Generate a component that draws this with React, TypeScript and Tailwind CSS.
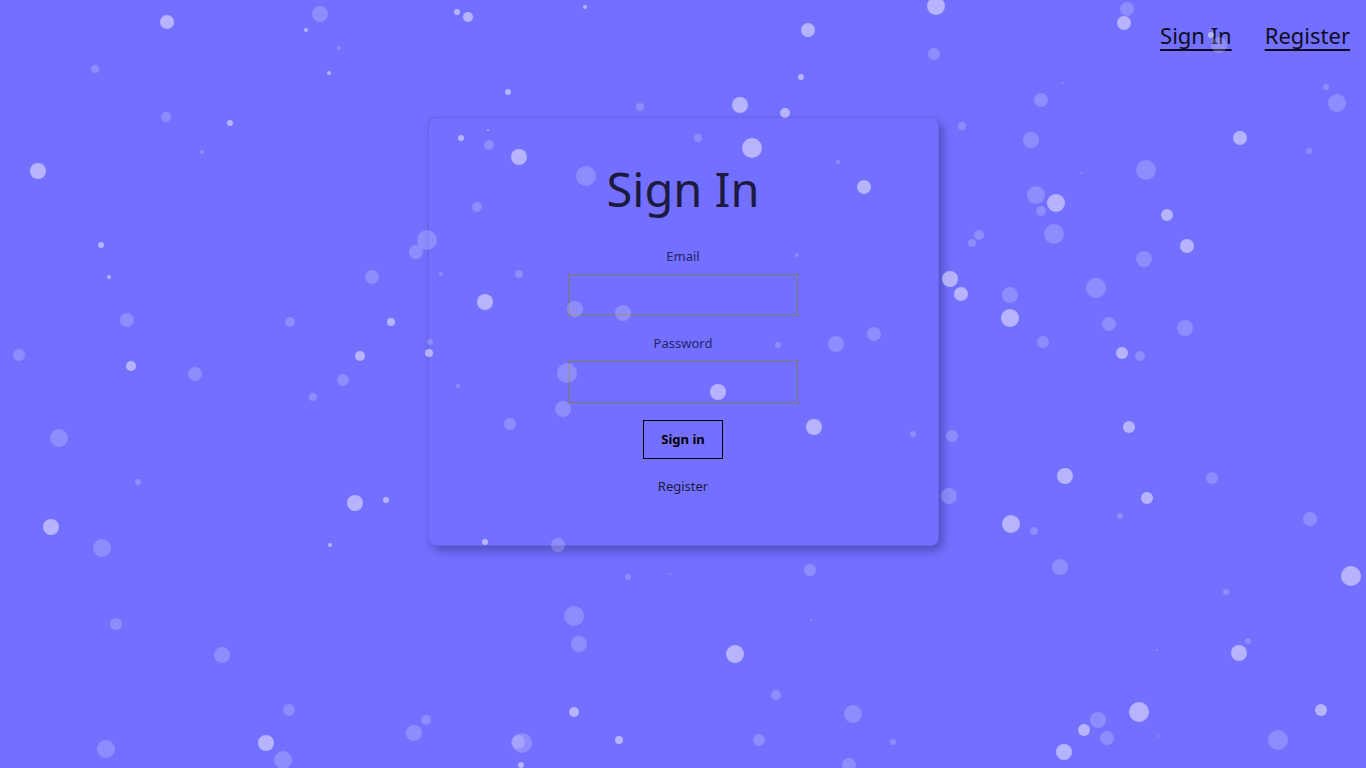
import React from "react";

// snowflakes: x, y, radius, bright (1) or faint (0)
const flakes: [number, number, number, number][] = [
  [167, 22, 7, 1], [320, 14, 8, 0], [457, 12, 3, 1], [468, 17, 5, 1], [585, 7, 2, 1], [306, 30, 2, 1],
  [95, 69, 4, 0], [329, 73, 2, 1], [339, 48, 2, 0], [230, 123, 3, 1], [166, 117, 5, 0], [202, 152, 2, 0],
  [38, 171, 8, 1], [101, 245, 3, 1], [109, 277, 2, 1], [127, 320, 7, 0], [19, 355, 6, 0], [131, 366, 5, 1],
  [195, 374, 7, 0], [59, 438, 9, 0], [138, 482, 3, 0], [51, 527, 8, 1], [102, 548, 9, 0], [116, 624, 6, 0],
  [222, 655, 8, 0], [289, 710, 6, 0], [266, 743, 8, 1], [106, 749, 9, 0], [283, 760, 9, 0], [330, 545, 2, 1],
  [355, 503, 8, 1], [386, 500, 3, 1], [343, 380, 6, 0], [360, 356, 5, 1], [391, 322, 4, 1], [372, 277, 7, 0],
  [290, 322, 5, 0], [313, 397, 4, 0], [430, 342, 3, 0], [429, 353, 4, 1], [458, 386, 2, 0], [441, 274, 2, 0],
  [427, 240, 10, 0], [416, 252, 7, 0], [477, 207, 5, 0], [485, 302, 8, 1], [519, 157, 8, 1], [489, 145, 5, 0],
  [461, 138, 3, 1], [488, 130, 1, 1], [508, 92, 3, 1], [586, 176, 10, 0], [640, 107, 4, 0], [698, 138, 4, 0],
  [740, 105, 8, 1], [752, 148, 10, 1], [785, 113, 5, 1], [801, 77, 3, 1], [808, 30, 7, 1], [838, 162, 2, 0],
  [864, 187, 7, 1], [797, 255, 2, 0], [519, 274, 4, 0], [575, 309, 8, 0], [623, 313, 8, 0], [567, 373, 10, 0],
  [563, 409, 8, 0], [718, 392, 8, 1], [778, 345, 3, 0], [836, 344, 8, 0], [874, 334, 7, 0], [510, 424, 6, 0],
  [814, 427, 8, 1], [913, 434, 3, 0], [952, 436, 6, 0], [949, 496, 8, 0], [961, 294, 7, 1], [950, 279, 8, 1],
  [979, 235, 5, 0], [972, 243, 4, 0], [962, 126, 4, 0], [934, 54, 6, 0], [936, 6, 9, 1], [1124, 23, 7, 1],
  [1127, 9, 7, 0], [1041, 100, 7, 0], [1063, 83, 1, 0], [1031, 140, 8, 0], [1036, 195, 9, 0], [1056, 203, 9, 1],
  [1041, 211, 5, 0], [1054, 234, 10, 0], [1096, 288, 10, 0], [1010, 295, 8, 0], [1010, 318, 9, 1], [1109, 324, 7, 0],
  [1043, 342, 6, 0], [1122, 353, 6, 1], [1140, 356, 5, 0], [1144, 259, 8, 0], [1146, 170, 10, 0], [1167, 215, 6, 1],
  [1187, 246, 7, 1], [1081, 173, 1, 0], [1185, 328, 8, 0], [1240, 138, 7, 1], [1309, 151, 3, 0], [1326, 87, 3, 0],
  [1337, 103, 9, 0], [1211, 35, 3, 1], [1219, 45, 8, 0], [1129, 427, 6, 1], [1065, 476, 8, 1], [1147, 498, 6, 1],
  [1212, 478, 6, 0], [1120, 516, 3, 0], [1034, 531, 4, 0], [1011, 524, 9, 1], [1060, 567, 8, 0], [1310, 519, 7, 0],
  [1351, 576, 10, 1], [1226, 592, 3, 0], [1248, 641, 3, 0], [1239, 653, 8, 1], [1157, 650, 1, 0], [1139, 712, 10, 1],
  [1098, 720, 8, 0], [1084, 730, 6, 1], [1107, 738, 7, 0], [1064, 752, 8, 1], [1278, 740, 10, 0], [1321, 710, 6, 1],
  [810, 570, 6, 0], [853, 714, 9, 0], [776, 695, 5, 0], [735, 654, 9, 1], [811, 620, 1, 0], [670, 574, 1, 0],
  [628, 577, 3, 0], [579, 644, 8, 0], [574, 616, 10, 0], [574, 712, 5, 1], [619, 740, 4, 1], [759, 740, 6, 0],
  [893, 742, 3, 0], [849, 765, 7, 0], [522, 743, 10, 0], [518, 742, 7, 0], [426, 720, 5, 0], [414, 733, 8, 0],
  [521, 765, 3, 1], [485, 542, 3, 1], [558, 545, 7, 0], [1159, 736, 1, 0],
];

function Snow() {
  return (
    <div className="pointer-events-none absolute inset-0 overflow-hidden">
      {flakes.map(([x, y, r, b], i) => (
        <span
          key={i}
          className="absolute rounded-full bg-white"
          style={{ left: x - r, top: y - r, width: r * 2, height: r * 2, opacity: b ? 0.48 : 0.2 }}
        />
      ))}
    </div>
  );
}

export default function App() {
  return (
    <main className="relative min-h-screen h-[768px] overflow-hidden bg-[#7370ff] font-['Noto_Sans','Open_Sans',sans-serif]">
      <nav className="flex justify-end gap-[33px] pr-[16px] pt-[19px]">
        <a href="#" className="text-[22px] leading-[32px] text-[#0d0c24] underline underline-offset-[5px] decoration-[2px]">Sign In</a>
        <a href="#" className="text-[22px] leading-[32px] text-[#0d0c24] underline underline-offset-[5px] decoration-[2px]">Register</a>
      </nav>

      <div className="flex justify-center pt-[66px]">
        <div className="w-[511px] rounded-lg border border-black/10 bg-[#7370ff] pt-[42px] pb-[50px] shadow-[4px_5px_10px_rgba(20,18,80,0.35)] flex flex-col items-center">
          <h1 className="text-[47px] leading-[58px] text-[#1c1a3e]">Sign In</h1>

          <label className="mt-[29px] text-[13px] leading-[18px] text-[#27246a]">Email</label>
          <input type="email" className="mt-[9px] h-[42px] w-[230px] border border-[#7c7a70] bg-transparent outline-none" />

          <label className="mt-[18px] text-[13px] leading-[18px] text-[#27246a]">Password</label>
          <input type="password" className="mt-[9px] h-[42px] w-[230px] border border-[#7c7a70] bg-transparent outline-none" />

          <button className="mt-[17px] h-[39px] w-[80px] border border-black text-[13px] font-bold text-black">Sign in</button>

          <a href="#" className="mt-[18px] text-[13px] leading-[18px] text-[#1c1a3e]">Register</a>
        </div>
      </div>

      <Snow />
    </main>
  );
}
